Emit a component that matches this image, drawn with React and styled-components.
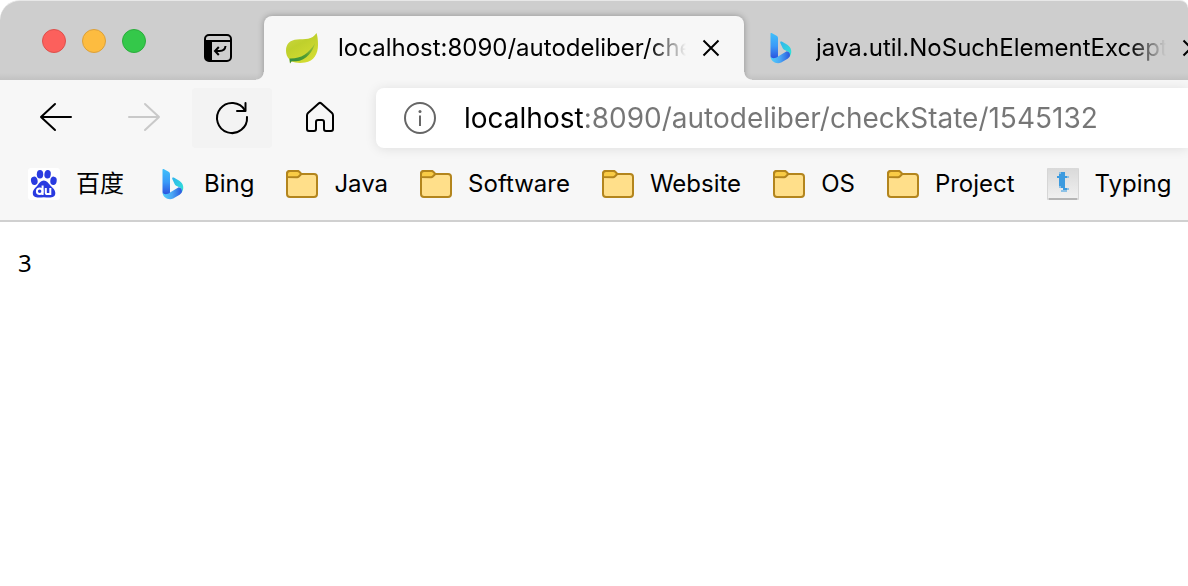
import React, { useState } from 'react';
import styled, { createGlobalStyle } from 'styled-components';

const GlobalStyle = createGlobalStyle`
	* {
		box-sizing: border-box;
	}

	body {
		margin: 0;
		background: #fff;
		font-family: Inter, 'Noto Sans CJK SC', sans-serif;
		color: #000;
	}

	button {
		border: 0;
		padding: 0;
		background: none;
		color: inherit;
		font: inherit;
	}

	svg {
		display: block;
		flex: none;
	}
`;

const Browser = styled.div`
	min-height: 100vh;
	overflow: hidden;
	background: #fff;
`;

const TitleBar = styled.header`
	display: flex;
	align-items: flex-end;
	height: 80px;
	border-top: 1px solid #e8e8e8;
	border-radius: 20px 8px 0 0;
	background: linear-gradient(#cecece 72px, #c2c2c2);
`;

const WindowControls = styled.div`
	display: flex;
	flex: none;
	align-items: center;
	gap: 16px;
	height: 78px;
	padding-left: 42px;
`;

const Light = styled.button`
	width: 24px;
	height: 24px;
	border: 1px solid ${(props) => props.$edge};
	border-radius: 50%;
	background: ${(props) => props.$color};
`;

const TabActions = styled.button`
	flex: none;
	width: 28px;
	height: 28px;
	margin: 0 32px 18px 58px;
`;

const Tabs = styled.nav`
	display: flex;
	height: 64px;
`;

const Tab = styled.div`
	position: relative;
	display: flex;
	flex: none;
	align-items: center;
	gap: 20px;
	width: 480px;
	padding: 0 24px 0 ${(props) => (props.$active ? '22px' : '20px')};
	border-radius: 8px 8px 0 0;
	background: ${(props) => (props.$active ? '#f7f7f7' : 'transparent')};
	box-shadow: ${(props) => (props.$active ? '0 0 6px rgba(0, 0, 0, 0.3)' : 'none')};
	clip-path: inset(-8px -8px 0 -8px);

	&::before,
	&::after {
		content: '';
		display: ${(props) => (props.$active ? 'block' : 'none')};
		position: absolute;
		bottom: 0;
		width: 8px;
		height: 8px;
	}

	&::before {
		right: 100%;
		background: radial-gradient(circle at 0 0, transparent 7px, #f7f7f7 8px);
	}

	&::after {
		left: 100%;
		background: radial-gradient(circle at 100% 0, transparent 7px, #f7f7f7 8px);
	}
`;

const TabTitle = styled.span`
	flex: 1;
	min-width: 0;
	margin-right: -4px;
	overflow: hidden;
	font-size: 24px;
	line-height: 32px;
	white-space: nowrap;
	mask-image: linear-gradient(to left, transparent, #000 36px);
`;

const CloseButton = styled.button`
	flex: none;
	width: 18px;
	height: 18px;
`;

const Chrome = styled.div`
	border-bottom: 2px solid #d0d0d0;
	background: #f7f7f7;
`;

const Toolbar = styled.div`
	display: flex;
	gap: 8px;
	padding: 8px 0 8px 16px;
`;

const ToolButton = styled.button`
	display: flex;
	flex: none;
	align-items: center;
	justify-content: center;
	width: 80px;
	height: 60px;
	border-radius: 4px;
	background: ${(props) => (props.$hovered ? '#f3f3f3' : 'transparent')};

	&:disabled {
		color: #c9c9c9;
	}
`;

const AddressBar = styled.label`
	display: flex;
	flex: 1;
	align-items: center;
	gap: 28px;
	height: 60px;
	margin-left: 8px;
	padding-left: 28px;
	border-radius: 8px 0 0 8px;
	background: #fff;
	box-shadow: 0 1px 12px rgba(0, 0, 0, 0.1);
`;

const AddressInput = styled.input`
	flex: 1;
	min-width: 0;
	height: 40px;
	padding: 0;
	border: 0;
	outline: 0;
	background: linear-gradient(to right, #000 121px, #767676 121px);
	background-clip: text;
	color: transparent;
	caret-color: #000;
	font: 28px Inter, sans-serif;
`;

const Bookmarks = styled.nav`
	display: flex;
	gap: 32px;
	height: 64px;
	padding-left: 28px;
`;

const Bookmark = styled.a`
	display: flex;
	flex: none;
	align-items: center;
	gap: 16px;
	height: 56px;
	color: #000;
	font-size: 24px;
	line-height: 32px;
	text-decoration: none;
`;

const Page = styled.main`
	padding: 24px 18px;

	pre {
		margin: 0;
		font: 24px/34px 'Noto Sans', sans-serif;
	}
`;

function BingIcon() {
	return (
		<svg width="32" height="32" viewBox="0 0 32 32" aria-hidden="true">
			<defs>
				<linearGradient id="bingStem" x1="0" y1="0" x2="0" y2="1">
					<stop offset="0" stopColor="#3fc0fa" />
					<stop offset="0.5" stopColor="#3a9af8" />
					<stop offset="1" stopColor="#2b4fdd" />
				</linearGradient>
				<linearGradient id="bingBowl" x1="0" y1="0" x2="1" y2="1">
					<stop offset="0" stopColor="#2fb4ee" />
					<stop offset="1" stopColor="#31e5d5" />
				</linearGradient>
				<linearGradient id="bingFoot" x1="0" y1="0" x2="1" y2="0">
					<stop offset="0" stopColor="#4fd0fb" />
					<stop offset="0.5" stopColor="#4aa5f4" />
					<stop offset="1" stopColor="#2958dd" />
				</linearGradient>
			</defs>
			<path d="M6.500 1.600c0-.6.6-.8 1.100-.5l5 2.700c1 .6 1.400 1.300 1.400 2.400V25c0 3-7.500 3-7.500-1z" fill="url(#bingStem)" />
			<path d="M16.400 11.200c-.6-1.400.1-2.100 1.400-1.600l5.500 3.100c4.500 2.700 5.200 8.300 2.200 12.100 1-3-.1-4.500-2.200-5.500l-3.200-1.500c-.8-.4-1.200-1-1.500-1.700z" fill="url(#bingBowl)" />
			<path d="M14 24.500l8.700-5.200c2.900.4 3.900 3 2.900 5.500-.5.8-1.200 1.500-2 2l-6.400 3.700C12.500 32.600 6.500 29.500 6.500 24c1 3.500 5.500 2.200 7.500.5z" fill="url(#bingFoot)" />
		</svg>
	);
}

function LeafIcon() {
	return (
		<svg width="32" height="32" viewBox="0 0 32 32" aria-hidden="true">
			<defs>
				<linearGradient id="leaf" x1="0" y1="0" x2="0.6" y2="1">
					<stop offset="0" stopColor="#cdd94a" />
					<stop offset="0.45" stopColor="#bfd02c" />
					<stop offset="1" stopColor="#d3dc32" />
				</linearGradient>
				<linearGradient id="vein" x1="0" y1="1" x2="1" y2="0">
					<stop offset="0" stopColor="#2d8b45" />
					<stop offset="0.5" stopColor="#4f9c32" />
					<stop offset="1" stopColor="#b0ca35" />
				</linearGradient>
			</defs>
			<path d="M30.500 1C31.500 4 32 8 32 13c0 9-4 16-13 17.500-5 .8-10 .3-13.500-1L4 31.500l-.5-4C1 25 0 22 0 18.500 0 11.500 4.500 8 11 7.500c8-.6 15 .5 19.500-6.500z" fill="url(#leaf)" />
			<path d="M3.500 26.500C14 27 23 22 29 11c-1.500 7.500-8.500 17.800-19 18.300-2 .1-3.500-.1-4.700.1L4 31.500z" fill="url(#vein)" />
		</svg>
	);
}

function BaiduIcon() {
	return (
		<svg width="32" height="32" viewBox="0 0 32 32" aria-hidden="true">
			<rect width="32" height="32" rx="3" fill="#fff" />
			<g fill="#2a3be0">
				<ellipse cx="6.300" cy="12.800" rx="3.300" ry="4.200" transform="rotate(-12 6.300 12.800)" />
				<ellipse cx="12" cy="6.300" rx="3.200" ry="4.300" />
				<ellipse cx="19.600" cy="6.300" rx="3.200" ry="4.300" transform="rotate(8 19.600 6.300)" />
				<ellipse cx="25.500" cy="12.800" rx="3.200" ry="4.200" transform="rotate(8 25.500 12.800)" />
				<path d="M15.800 12.500c3 0 4.400 2.300 6.200 4.600 2 2.500 5.300 4.400 5.300 8 0 5-4.300 4.700-11.500 4.200-6.500.6-11 .8-11-4.200 0-3.500 3-5.300 5-8 1.700-2.400 3-4.600 6-4.600z" />
			</g>
			<g fill="none" stroke="#fff" strokeWidth="2">
				<circle cx="11.700" cy="23.300" r="2.800" />
				<path d="M14.600 17.500v9.500M17.800 20v4.400q0 1.700 1.600 1.700h2.600M22.300 20v7" />
			</g>
		</svg>
	);
}

function FolderIcon() {
	return (
		<svg width="32" height="32" viewBox="0 0 32 32" stroke="#b3851d" strokeWidth="2" strokeLinejoin="round" aria-hidden="true">
			<path d="M1 6q0-3 3-3h8l3 3h13q3 0 3 3v17q0 3-3 3H4q-3 0-3-3z" fill="#ffdf8a" />
			<path d="M1 9V6q0-3 3-3h7.500q1 0 1.700.7L15.300 6l-2.500 2.500q-.7.7-1.700.7z" fill="#f9cb45" />
		</svg>
	);
}

function TypingIcon() {
	return (
		<svg width="32" height="32" viewBox="0 0 32 32" aria-hidden="true">
			<defs>
				<linearGradient id="key" x1="0" y1="0" x2="0" y2="1">
					<stop offset="0" stopColor="#d9d9d9" />
					<stop offset="1" stopColor="#f0f0f0" />
				</linearGradient>
			</defs>
			<rect width="32" height="32" rx="1" fill="#d6d6d6" />
			<rect x="1" width="30" height="30" fill="url(#key)" />
			<path d="M2 30h28v2H2z" fill="#b5b5b5" />
			<path d="M12 6h2V4h4v4h2v2h-2v10h2v2h-4v-2h-2v-2h-2v-8h-2V8h2z" fill="#3d9bdf" />
			<path d="M12 4h2v2h-2zM20 8h2v2h-2zM20 20h2v2h-2zM12 18h2v2h-2zM14 22h6v2h-6z" fill="#8cc1e6" />
		</svg>
	);
}

function CloseIcon() {
	return (
		<svg width="18" height="18" viewBox="0 0 18 18" fill="none" stroke="#000" strokeWidth="2" aria-hidden="true">
			<path d="M1.500 1.500l15 15M16.500 1.500l-15 15" />
		</svg>
	);
}

function ToolIcon({ children }) {
	return (
		<svg
			width="36"
			height="36"
			viewBox="0 0 36 36"
			fill="none"
			stroke="currentColor"
			strokeWidth="2"
			strokeLinecap="round"
			strokeLinejoin="round"
			aria-hidden="true"
		>
			{children}
		</svg>
	);
}

const lights = [
	{ label: 'Close window', color: '#fc605c', edge: '#dd504c' },
	{ label: 'Minimize window', color: '#fdbc40', edge: '#dba03a' },
	{ label: 'Zoom window', color: '#34c84a', edge: '#2bad3c' },
];

const tabs = [
	{ title: 'localhost:8090/autodeliber/check', icon: LeafIcon, active: true },
	{ title: 'java.util.NoSuchElementException', icon: BingIcon, active: false },
];

const bookmarks = [
	{ name: '百度', icon: BaiduIcon },
	{ name: 'Bing', icon: BingIcon },
	{ name: 'Java', icon: FolderIcon },
	{ name: 'Software', icon: FolderIcon },
	{ name: 'Website', icon: FolderIcon },
	{ name: 'OS', icon: FolderIcon },
	{ name: 'Project', icon: FolderIcon },
	{ name: 'Typing', icon: TypingIcon },
];

export default function App() {
	const [address, setAddress] = useState('localhost:8090/autodeliber/checkState/1545132');

	return (
		<Browser>
			<GlobalStyle />
			<TitleBar>
				<WindowControls>
					{lights.map((light) => (
						<Light key={light.label} aria-label={light.label} $color={light.color} $edge={light.edge} />
					))}
				</WindowControls>
				<TabActions aria-label="Tab actions">
					<svg width="28" height="28" viewBox="0 0 28 28" fill="none" stroke="#000" strokeWidth="2" aria-hidden="true">
						<rect x="1" y="1" width="26" height="26" rx="4" />
						<path d="M1 7h26" />
						<path d="M1 7h7v20H5q-4 0-4-4z" fill="#000" stroke="none" />
						<path d="M21.500 12q-.5 5-6 5H11M14.800 13L11 17l3.800 4" />
					</svg>
				</TabActions>
				<Tabs>
					{tabs.map(({ title, icon: Icon, active }) => (
						<Tab key={title} $active={active}>
							<Icon />
							<TabTitle>{title}</TabTitle>
							<CloseButton aria-label="Close tab">
								<CloseIcon />
							</CloseButton>
						</Tab>
					))}
				</Tabs>
			</TitleBar>
			<Chrome>
				<Toolbar>
					<ToolButton aria-label="Back">
						<ToolIcon>
							<path d="M33 17H3M17 4L3 17l14 13" />
						</ToolIcon>
					</ToolButton>
					<ToolButton aria-label="Forward" disabled>
						<ToolIcon>
							<path d="M3 17h30M19 4l14 13-14 13" />
						</ToolIcon>
					</ToolButton>
					<ToolButton aria-label="Reload" $hovered>
						<ToolIcon>
							<path d="M33 17A15 15 0 1 1 31 10.500" />
							<path d="M31.500 3v8H23" />
						</ToolIcon>
					</ToolButton>
					<ToolButton aria-label="Home">
						<ToolIcon>
							<path d="M5 15.500q0-1.500 1-2.500L16.600 3.500q1.400-1.300 2.800 0L30 13q1 1 1 2.500V29q0 2-2 2h-5q-2 0-2-2v-7q0-2-2-2h-4q-2 0-2 2v7q0 2-2 2H7q-2 0-2-2z" />
						</ToolIcon>
					</ToolButton>
					<AddressBar>
						<svg width="32" height="32" viewBox="0 0 32 32" fill="none" stroke="#666" strokeWidth="2" aria-hidden="true">
							<circle cx="16" cy="16" r="15" />
							<path d="M16 13.500V24" />
							<circle cx="16" cy="9.500" r="1.500" fill="#666" stroke="none" />
						</svg>
						<AddressInput
							aria-label="Address"
							value={address}
							onChange={(event) => setAddress(event.target.value)}
							spellCheck="false"
						/>
					</AddressBar>
				</Toolbar>
				<Bookmarks>
					{bookmarks.map(({ name, icon: Icon }) => (
						<Bookmark key={name} href="#">
							<Icon />
							{name}
						</Bookmark>
					))}
				</Bookmarks>
			</Chrome>
			<Page>
				<pre>3</pre>
			</Page>
		</Browser>
	);
}
